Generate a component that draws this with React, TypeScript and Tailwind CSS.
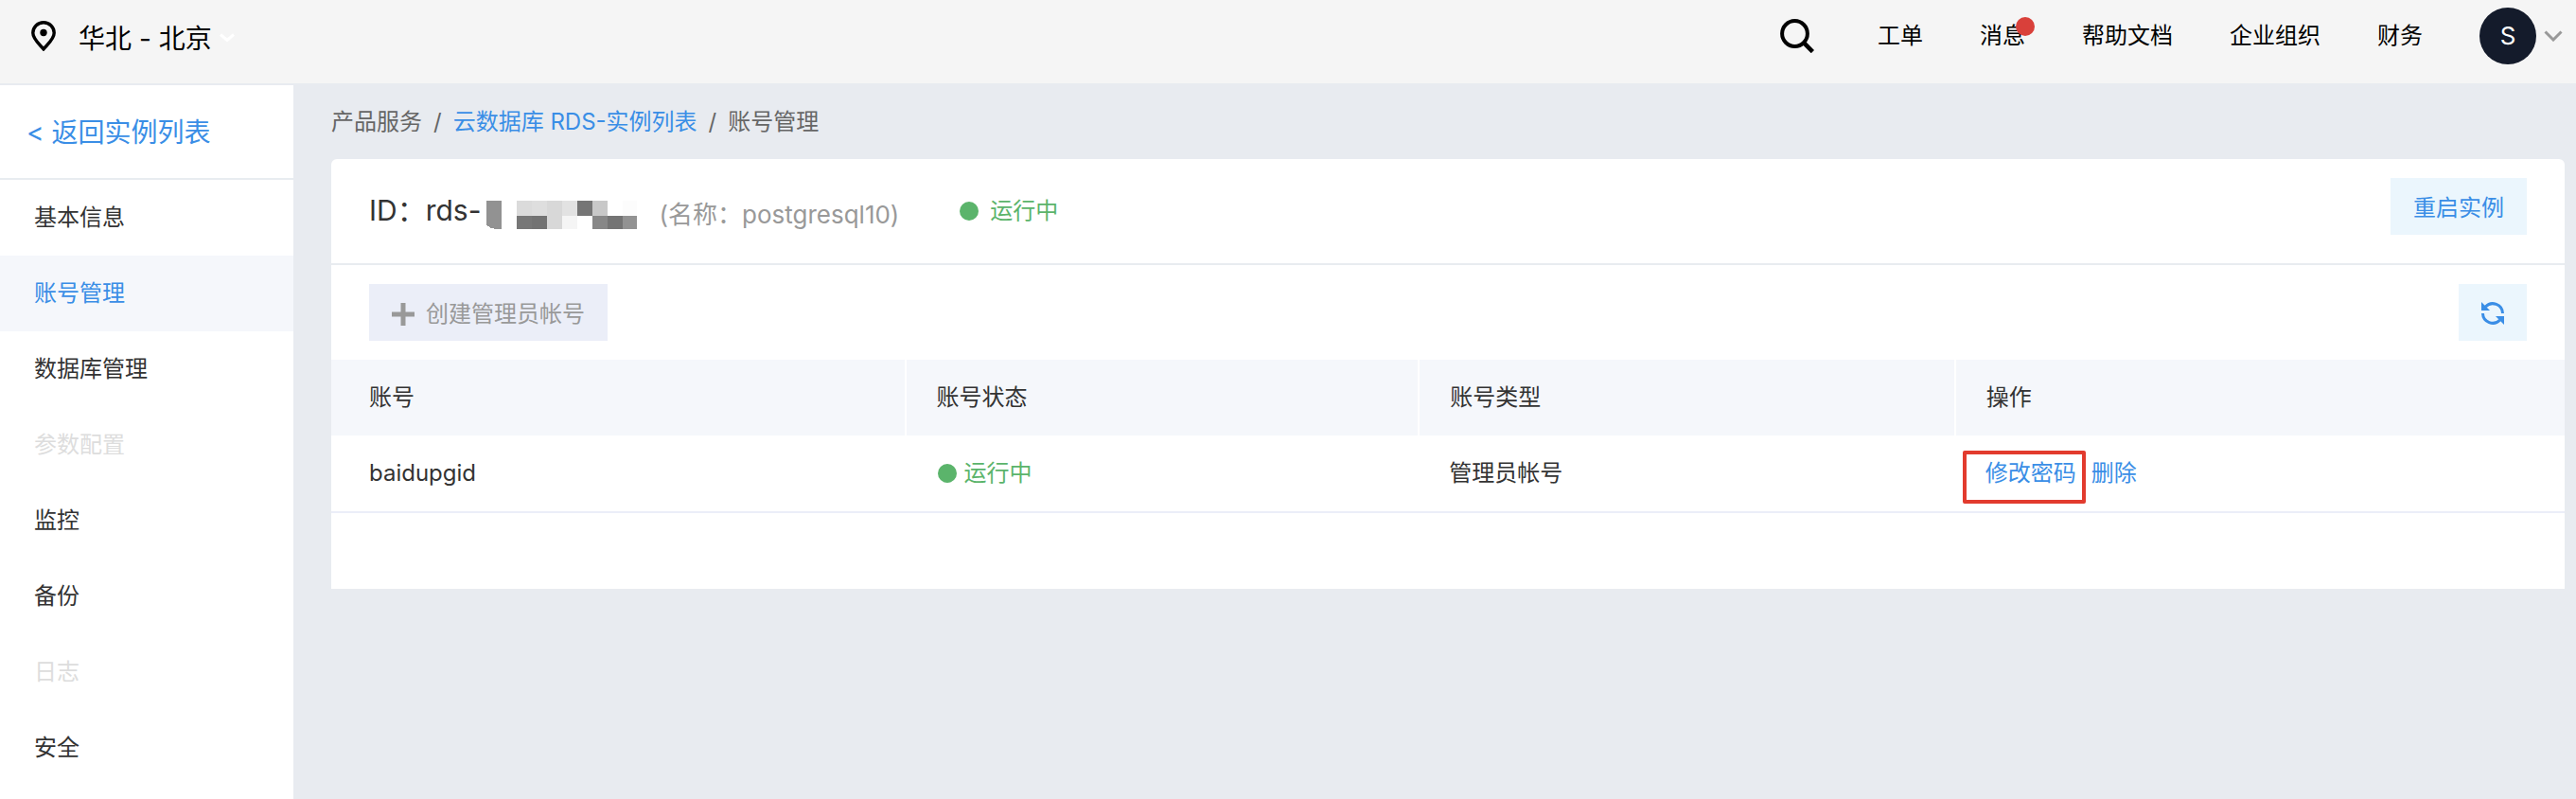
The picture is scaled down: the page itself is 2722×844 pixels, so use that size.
import React from 'react';

interface MenuItem {
  label: string;
  active?: boolean;
  disabled?: boolean;
}

const menuItems: MenuItem[] = [
  { label: '基本信息' },
  { label: '账号管理', active: true },
  { label: '数据库管理' },
  { label: '参数配置', disabled: true },
  { label: '监控' },
  { label: '备份' },
  { label: '日志', disabled: true },
  { label: '安全' },
];

const accounts = [{ name: 'baidupgid', status: '运行中', type: '管理员帐号' }];

const PinIcon = () => (
  <svg className="w-[26px] h-8 mb-1" viewBox="0 0 26 32" fill="none">
    <path d="M13 1.8C6.8 1.8 1.8 6.6 1.8 12.8c0 6.6 6.8 11.8 11.2 17 4.4-5.2 11.2-10.4 11.2-17C24.2 6.6 19.2 1.8 13 1.8z" stroke="#000" strokeWidth="3.4" />
    <circle cx="13" cy="12.5" r="3.7" fill="#000" />
  </svg>
);

const SearchIcon = () => (
  <svg className="w-9 h-9" viewBox="0 0 36 36" fill="none" stroke="#000" strokeWidth="4">
    <circle cx="15.5" cy="15.5" r="13.4" />
    <path d="M24.8 24.8L34.4 34.6" strokeWidth="4.6" />
  </svg>
);

const RefreshIcon = () => (
  <svg className="w-6 h-6" viewBox="0 0 24 24" fill="none">
    <path d="M4.4 5A10.5 10.5 0 0 1 22.5 12" stroke="#3a8ee6" strokeWidth="3" />
    <path d="M19.6 19A10.5 10.5 0 0 1 1.5 12" stroke="#3a8ee6" strokeWidth="3" />
    <path d="M0 0v9h9z" fill="#3a8ee6" />
    <path d="M24 24v-9h-9z" fill="#3a8ee6" />
  </svg>
);

// Masked part of the instance id
const MaskedId = () => (
  <svg className="w-40 h-[30px]" viewBox="0 0 160 30" shapeRendering="crispEdges">
    <path d="M1 0h16v30h-3C7 30 3 28 1 25z" fill="#929292" />
    <path d="M33 0h16v16h-16z" fill="#dbdbdb" />
    <path d="M49 0h16v16h-16z" fill="#dedede" />
    <path d="M65 0h16v30h-16z" fill="#d8d8d8" />
    <path d="M81 0h16v16h-16z" fill="#e2e2e2" />
    <path d="M97 0h16v16h-16z" fill="#757575" />
    <path d="M113 0h16v16h-16z" fill="#c8c8c8" />
    <path d="M145 0h15v16h-15z" fill="#fcfcfc" />
    <path d="M33 16h16v14h-16z" fill="#777777" />
    <path d="M49 16h16v14h-16z" fill="#737373" />
    <path d="M81 16h16v14h-16z" fill="#f5f5f5" />
    <path d="M113 16h16v14h-16z" fill="#878787" />
    <path d="M129 16h16v14h-16z" fill="#747474" />
    <path d="M145 16h15v14h-15z" fill="#929292" />
  </svg>
);

const Header: React.FC = () => (
  <header className="flex justify-between h-[88px] bg-[#f5f5f5] text-black">
    <button className="flex items-center h-20 pl-[33px] text-[28px]">
      <PinIcon />
      <span className="ml-6 mr-2 pt-1">华北 - 北京</span>
      <svg className="w-4 h-3" viewBox="0 0 16 12" fill="none" stroke="#fff" strokeWidth="3">
        <path d="M1 2.5l7 6 7-6" />
      </svg>
    </button>
    <nav className="flex items-center gap-[60px] h-[76px] pr-[14px] text-2xl">
      <button aria-label="搜索" className="mr-[7px]">
        <SearchIcon />
      </button>
      <a href="#">工单</a>
      <a href="#" className="relative">
        消息
        <span className="absolute -top-1 -right-[10px] w-5 h-5 rounded-full bg-[#d9403a]"></span>
      </a>
      <a href="#">帮助文档</a>
      <a href="#">企业组织</a>
      <a href="#">财务</a>
      <button className="flex items-center gap-2">
        <span className="flex items-center justify-center w-[60px] h-[60px] rounded-full bg-[#141b2b] text-[26px] text-white">S</span>
        <svg className="w-5 h-3" viewBox="0 0 20 12" fill="none" stroke="#999" strokeWidth="3">
          <path d="M1.5 1.5l8.5 8.5 8.5-8.5" />
        </svg>
      </button>
    </nav>
  </header>
);

const Sidebar: React.FC = () => (
  <aside className="w-[310px] shrink-0 bg-white">
    <a href="#" className="flex items-center h-[100px] pl-7 pt-1 gap-2 border-b-2 border-[#e8ecf0] text-[28px] text-[#3a8ee6]">
      <span>&lt;</span>
      <span>返回实例列表</span>
    </a>
    <ul>
      {menuItems.map((item) => (
        <li key={item.label}>
          <button
            disabled={item.disabled}
            className={`flex items-center w-full h-20 px-9 ${item.active ? 'bg-[#f5f7fb] text-[#3a8ee6]' : item.disabled ? 'text-[#dddddd]' : 'text-[#333333]'}`}
          >
            {item.label}
          </button>
        </li>
      ))}
    </ul>
  </aside>
);

const Status: React.FC<{ label: string; className: string }> = ({ label, className }) => (
  <span className={`flex items-center text-[#5bb46b] ${className}`}>
    <span className="w-5 h-5 rounded-full bg-[#5bb46b]"></span>
    {label}
  </span>
);

const App: React.FC = () => {
  return (
    <div
      lang="zh-CN"
      className="flex flex-col min-h-screen bg-[#e8ebf0] font-[Inter,'Noto_Sans_CJK_SC',sans-serif] text-2xl text-[#333333]"
    >
      <Header />

      <div className="flex grow pt-[2px]">
        <Sidebar />

        <main className="grow pl-10 pr-3">
          <nav className="flex items-center gap-3 h-[78px] text-[#666666]">
            <span>产品服务</span>
            <span>/</span>
            <a href="#" className="text-[#3a8ee6]">云数据库 RDS-实例列表</a>
            <span>/</span>
            <span>账号管理</span>
          </nav>

          <section className="rounded-t-md bg-white pb-20">
            <div className="flex items-start justify-between h-28 pl-10 pr-10 pt-5 border-b-2 border-[#e8ecf0]">
              <div className="flex items-center h-[70px]">
                <h1 className="text-[30px]">ID：rds-</h1>
                <div className="flex items-center gap-6 ml-1 pt-2">
                  <MaskedId />
                  <span className="text-[26px] text-[#999999]">(名称：postgresql10)</span>
                </div>
                <Status label="运行中" className="ml-16 gap-3" />
              </div>
              <button className="h-[60px] px-6 pt-1 bg-[#ebf6fd] text-[#3a8ee6]">重启实例</button>
            </div>

            <div className="flex items-center justify-between h-[100px] px-10">
              <button disabled className="flex items-center gap-3 h-[60px] px-6 pt-1 bg-[#ebeef8] text-[#999999]">
                <svg className="w-6 h-6" viewBox="0 0 24 24" stroke="#999" strokeWidth="5">
                  <path d="M12 0v24M0 12h24" />
                </svg>
                创建管理员帐号
              </button>
              <button aria-label="刷新" className="flex items-center justify-center w-[72px] h-[60px] pt-[2px] bg-[#ebf6fd]">
                <RefreshIcon />
              </button>
            </div>

            <table className="w-full table-fixed text-left">
              <thead>
                <tr className="h-20 bg-[#f5f7fb]">
                  <th className="w-[25.7%] pl-10 font-normal border-r-2 border-white">账号</th>
                  <th className="w-[23%] pl-8 font-normal border-r-2 border-white">账号状态</th>
                  <th className="w-[24%] pl-8 font-normal border-r-2 border-white">账号类型</th>
                  <th className="pl-8 font-normal">操作</th>
                </tr>
              </thead>
              <tbody>
                {accounts.map((account) => (
                  <tr key={account.name} className="h-[81px] border-b-2 border-[#ebeef8]">
                    <td className="pl-10">{account.name}</td>
                    <td className="pl-[34px]">
                      <Status label={account.status} className="gap-2" />
                    </td>
                    <td className="pl-8">{account.type}</td>
                    <td className="pl-8">
                      <div className="flex gap-4 text-[#3a8ee6]">
                        <a href="#" className="relative">
                          修改密码
                          <span className="absolute -top-2 -bottom-4 -left-6 -right-[10px] border-4 border-[#e23b2e] rounded-xs"></span>
                        </a>
                        <a href="#">删除</a>
                      </div>
                    </td>
                  </tr>
                ))}
              </tbody>
            </table>
          </section>
        </main>
      </div>
    </div>
  );
};

export default App;
